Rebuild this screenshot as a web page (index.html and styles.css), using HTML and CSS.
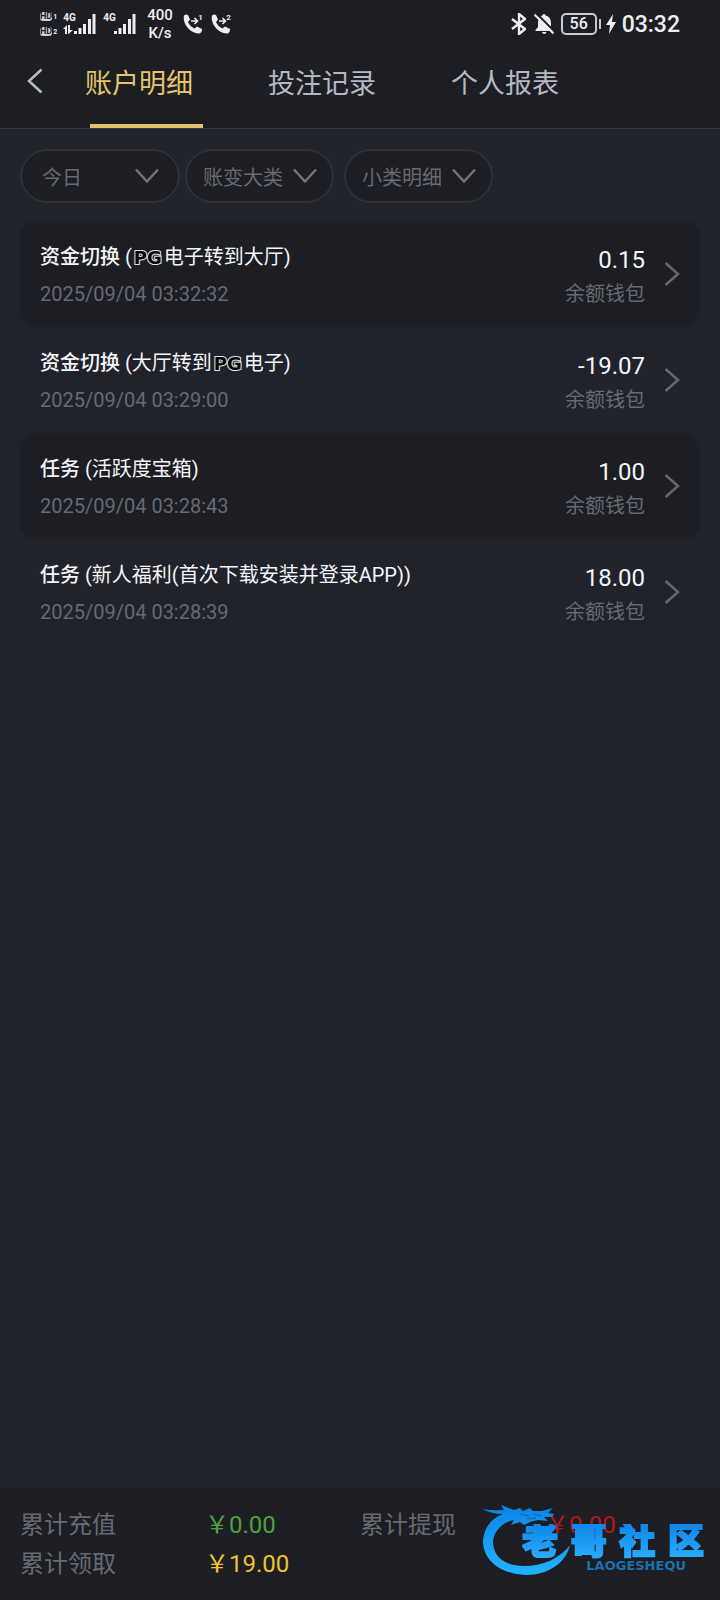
FILE: index.html
```html
<!DOCTYPE html>
<html lang="zh-CN">
<head>
<meta charset="utf-8">
<meta name="viewport" content="width=device-width, initial-scale=1">
<title>账户明细</title>
<link rel="stylesheet" href="styles.css">
</head>
<body>
<div class="app">
  <header class="top">
    <div class="status">
      <div class="status-group">
        <div class="hd">
          <div class="hd-row"><span class="hd-tag">HD</span><span class="hd-num">1</span></div>
          <div class="hd-row"><span class="hd-tag">HD</span><span class="hd-num">2</span></div>
        </div>
        <div class="cell">
          <span class="net">4G</span>
          <svg width="34" height="22" viewBox="0 0 34 22" fill="#eceef2"><path d="M0 16l4-4v9H2v-5zM5 12h2v5h3l-5 4.500zM11 18h3v3h-3zM15.500 15h3v6h-3zM20 11h3v10h-3zM25 6h3v15h-3zM29.500 1h3v20h-3z"/></svg>
        </div>
        <div class="cell">
          <span class="net">4G</span>
          <svg width="34" height="22" viewBox="0 0 34 22" fill="#eceef2"><path d="M11 18h3v3h-3zM15.500 15h3v6h-3zM20 11h3v10h-3zM25 6h3v15h-3zM29.500 1h3v20h-3z"/></svg>
        </div>
        <div class="speed"><span>400</span><span>K/s</span></div>
        <div class="call">
          <svg width="20" height="20" viewBox="0 0 20 20"><path fill="#eceef2" d="M1 1.500Q3 0 5 1l2 4.500-2 2.500q2 4.500 6.500 6.500l2.500-2 5 2.500q.5 2.500-2 4.500C8 20-1 10 1 1.500z"/><path fill="none" stroke="#eceef2" stroke-width="1.600" d="M8 7h6M11.500 4l3 3-3 3"/></svg><sup>1</sup>
        </div>
        <div class="call">
          <svg width="20" height="20" viewBox="0 0 20 20"><path fill="#eceef2" d="M1 1.500Q3 0 5 1l2 4.500-2 2.500q2 4.500 6.500 6.500l2.500-2 5 2.500q.5 2.500-2 4.500C8 20-1 10 1 1.500z"/><path fill="none" stroke="#eceef2" stroke-width="1.600" d="M8 7h6M11.500 4l3 3-3 3"/></svg><sup>2</sup>
        </div>
      </div>
      <div class="status-group">
        <svg width="18" height="22" viewBox="0 0 18 22" fill="none" stroke="#eceef2" stroke-width="2.400" stroke-linejoin="round"><path d="M2 6l13 10-6 5V1l6 5L2 16"/></svg>
        <svg width="21" height="22" viewBox="0 0 21 22"><path fill="#eceef2" d="M10 1q1.500 0 1.800 1.500Q17 4 17 10v4l2 3v1H1.500v-1l2.500-3v-4q0-6 4.200-7.500Q8.500 1 10 1zM8 19h4.500q-.5 2-2.200 2T8 19z"/><path stroke="#1d1e23" stroke-width="2" d="M2 0l19 19"/><path stroke="#eceef2" stroke-width="2" d="M.5 1.500l19 19"/></svg>
        <span class="battery">56</span>
        <svg width="10" height="20" viewBox="0 0 10 20" fill="#eceef2"><path d="M7 0L0 11h4L3 20l7-12H6z"/></svg>
        <time class="clock">03:32</time>
      </div>
    </div>
    <nav class="tabs">
      <button class="back" type="button" aria-label="返回"><svg width="16" height="26" viewBox="0 0 16 26" fill="none" stroke="#b9bbc2" stroke-width="2.500"><path d="M14.500 1.500L2 13l12.500 11.500"/></svg></button>
      <a class="tab active" href="#">账户明细</a>
      <a class="tab" href="#">投注记录</a>
      <a class="tab" href="#">个人报表</a>
    </nav>
  </header>

  <main class="content">
    <div class="filters">
      <button class="filter wide" type="button">今日<svg class="down" viewBox="0 0 24 16"><path d="M1 1.500l11 12 11-12"/></svg></button>
      <button class="filter" type="button">账变大类<svg class="down" viewBox="0 0 24 16"><path d="M1 1.500l11 12 11-12"/></svg></button>
      <button class="filter last" type="button">小类明细<svg class="down" viewBox="0 0 24 16"><path d="M1 1.500l11 12 11-12"/></svg></button>
    </div>
    <ul class="list">
      <li class="item">
        <div class="info"><p class="title"><b>资金切换</b> (<span class="pg">PG</span>电子转到大厅)</p><time class="date">2025/09/04 03:32:32</time></div>
        <div class="sum"><span class="amount">0.15</span><span class="wallet">余额钱包</span></div>
        <svg class="go" viewBox="0 0 16 24"><path d="M1.500 1l12.500 11-12.500 11"/></svg>
      </li>
      <li class="item">
        <div class="info"><p class="title"><b>资金切换</b> (大厅转到<span class="pg">PG</span>电子)</p><time class="date">2025/09/04 03:29:00</time></div>
        <div class="sum"><span class="amount">-19.07</span><span class="wallet">余额钱包</span></div>
        <svg class="go" viewBox="0 0 16 24"><path d="M1.500 1l12.500 11-12.500 11"/></svg>
      </li>
      <li class="item">
        <div class="info"><p class="title"><b>任务</b> (活跃度宝箱)</p><time class="date">2025/09/04 03:28:43</time></div>
        <div class="sum"><span class="amount">1.00</span><span class="wallet">余额钱包</span></div>
        <svg class="go" viewBox="0 0 16 24"><path d="M1.500 1l12.500 11-12.500 11"/></svg>
      </li>
      <li class="item">
        <div class="info"><p class="title"><b>任务</b> (新人福利(首次下载安装并登录APP))</p><time class="date">2025/09/04 03:28:39</time></div>
        <div class="sum"><span class="amount">18.00</span><span class="wallet">余额钱包</span></div>
        <svg class="go" viewBox="0 0 16 24"><path d="M1.500 1l12.500 11-12.500 11"/></svg>
      </li>
    </ul>
  </main>

  <footer class="totals">
    <dl class="total-grid">
      <dt>累计充值</dt><dd class="green">￥0.00</dd>
      <dt>累计提现</dt><dd class="red">￥0.00</dd>
      <dt>累计领取</dt><dd class="yellow">￥19.00</dd>
    </dl>
    <div class="brand">
      <svg class="dragon" width="90" height="72" viewBox="0 0 90 72">
        <defs><linearGradient id="sky" x1="0" y1="0" x2="0" y2="1"><stop offset="0" stop-color="#0b84e8"/><stop offset="1" stop-color="#22b2ff"/></linearGradient></defs>
        <path fill="url(#sky)" d="M0 4Q10 6 22 5L19 0 32 5 38 3 41 6 48 3 51 6 60 6 71 3 66 8 72 9 70 12 62 12 66 16 56 15 48 17 42 20 38 17 29 20 32 15C20 17 11 27 11 38 12 53 24 61 42 61 62 61 78 53 88 40 84 58 66 70 44 70 18 69 1 55 1 36 2 22 10 13 21 9Q10 9 0 4z"/>
        <path fill="none" stroke="#1d5c96" stroke-width="1" d="M38 9l9 2M51 9l9 2M45 14l9-1"/>
      </svg>
      <div class="brand-name"><span>老</span><span>哥</span><span>社</span><span>区</span></div>
      <div class="brand-sub">LAOGESHEQU</div>
    </div>
  </footer>
</div>
</body>
</html>
```

FILE: styles.css
```css
* { box-sizing: border-box; }

body {
  margin: 0;
  background: #20232b;
  color: #f4f5f7;
  font-family: Roboto, "Noto Sans CJK SC", sans-serif;
}

button { font: inherit; cursor: pointer; }

.app {
  display: flex;
  flex-direction: column;
  min-height: 100vh;
}

.top {
  background: #1d1e23;
  border-bottom: 1px solid #34363e;
}

/* Status bar */
.status {
  display: flex;
  justify-content: space-between;
  align-items: center;
  height: 48px;
  padding: 0 40px;
  color: #eceef2;
}

.status-group {
  display: flex;
  align-items: center;
  gap: 6px;
}

.hd {
  display: flex;
  flex-direction: column;
  gap: 6px;
}

.hd-row {
  display: flex;
  align-items: flex-end;
  gap: 1px;
  line-height: 9px;
}

.hd-tag {
  border-radius: 3px;
  background: #cfd1d6;
  color: #1d1e23;
  font-size: 9px;
  font-weight: 700;
}

.hd-num {
  font-size: 7px;
  font-weight: 700;
  line-height: 7px;
}

.cell {
  position: relative;
  display: flex;
}

.net {
  position: absolute;
  left: 0;
  top: 0;
  font-size: 10px;
  font-weight: 700;
  line-height: 10px;
}

.speed {
  display: flex;
  flex-direction: column;
  align-items: center;
  margin: 0 4px;
  font-size: 15px;
  font-weight: 500;
  line-height: 18px;
}

.call {
  position: relative;
  display: flex;
  margin-right: 2px;
}

.call sup {
  position: absolute;
  right: 0;
  top: 0;
  font-size: 8px;
  font-weight: 700;
  line-height: 8px;
}

.battery {
  position: relative;
  width: 36px;
  margin-right: 3px;
  border: 2px solid #c9cbd0;
  border-radius: 5px;
  font-size: 16px;
  font-weight: 500;
  line-height: 18px;
  text-align: center;
}

.battery::after {
  content: "";
  position: absolute;
  right: -6px;
  top: 4px;
  width: 2px;
  height: 10px;
  background: #c9cbd0;
}

.clock {
  font-size: 23px;
  font-weight: 500;
}

/* Tabs */
.tabs {
  display: flex;
  align-items: stretch;
  height: 80px;
}

.back {
  width: 85px;
  padding: 0 0 14px 27px;
  border: 0;
  background: none;
  text-align: left;
}

.back svg { vertical-align: middle; }

.tab {
  position: relative;
  margin-right: 75px;
  padding-top: 16px;
  color: #b4b8c4;
  font-size: 27px;
  line-height: 40px;
  text-decoration: none;
}

.tab.active { color: #e6c36d; }

.tab.active::after {
  content: "";
  position: absolute;
  left: 5px;
  right: -10px;
  bottom: 0;
  height: 4px;
  background: #e5c26c;
}

.content {
  flex: 1;
  padding: 20px;
}

/* Filters */
.filters {
  display: flex;
  gap: 5px;
}

.filter {
  display: flex;
  align-items: center;
  gap: 10px;
  height: 54px;
  padding: 0 15px 0 16px;
  border: 2px solid #2d3035;
  border-radius: 27px;
  background: #1d1e23;
  color: #666a73;
  font-size: 20px;
}

.filter.wide {
  justify-content: space-between;
  width: 160px;
  padding: 0 19px 0 20px;
}

.filter.last { margin-left: 5px; }

.down {
  width: 24px;
  height: 16px;
  fill: none;
  stroke: #73757b;
  stroke-width: 2.5;
}

/* Records */
.list {
  display: flex;
  flex-direction: column;
  margin: 18px 0 0;
  padding: 0;
  list-style: none;
}

.item {
  display: flex;
  align-items: center;
  min-height: 106px;
  padding: 0 20px;
  border-radius: 16px;
}

.item:nth-child(odd) { background: #1d1e23; }

.info {
  flex: 1;
  padding-top: 4px;
}

.title {
  margin: 0;
  font-size: 20px;
  line-height: 36px;
}

.title b { font-weight: 500; }

.pg {
  margin: 0 2px;
  color: #08080a;
  font-family: "DejaVu Sans", sans-serif;
  font-size: 18px;
  font-weight: 700;
  line-height: 20px;
  paint-order: stroke fill;
  -webkit-text-stroke: 2px #e4e5e8;
}

.date {
  display: block;
  color: #666a73;
  font-size: 20px;
  line-height: 38px;
}

.sum {
  display: flex;
  flex-direction: column;
  align-items: flex-end;
  padding-top: 6px;
}

.amount {
  font-size: 24px;
  line-height: 34px;
}

.wallet {
  color: #666a73;
  font-size: 20px;
  line-height: 34px;
}

.go {
  width: 16px;
  height: 24px;
  margin-left: 19px;
  fill: none;
  stroke: #66686e;
  stroke-width: 2.5;
}

/* Totals */
.totals {
  position: relative;
  padding: 18px 20px 16px;
  background: #1d1e23;
}

.total-grid {
  display: grid;
  grid-template-columns: 185fr 155fr 185fr 155fr;
  margin: 0;
  font-size: 24px;
  line-height: 39px;
}

.total-grid dt { color: #666a73; }
.total-grid dd { margin: 0; }
.total-grid .green { color: #4fa23c; }
.total-grid .red { color: #b3161d; }
.total-grid .yellow { color: #f2c12e; }

/* Brand mark over the totals */
.brand {
  position: absolute;
  right: 16px;
  top: 17px;
  width: 222px;
  height: 74px;
}

.dragon {
  position: absolute;
  left: 0;
  top: 0;
}

.brand-name {
  position: absolute;
  right: 0;
  top: 19px;
  display: flex;
  justify-content: space-between;
  width: 182px;
  background: linear-gradient(#0f86ea, #2aaeff);
  -webkit-background-clip: text;
  background-clip: text;
  color: transparent;
  font-size: 36px;
  font-weight: 900;
  line-height: 36px;
  -webkit-text-stroke: 2px transparent;
}

.brand-sub {
  position: absolute;
  right: 18px;
  top: 54px;
  color: #1a70b0;
  font-family: "DejaVu Sans", sans-serif;
  font-size: 13px;
  font-weight: 700;
  line-height: 14px;
}
```
